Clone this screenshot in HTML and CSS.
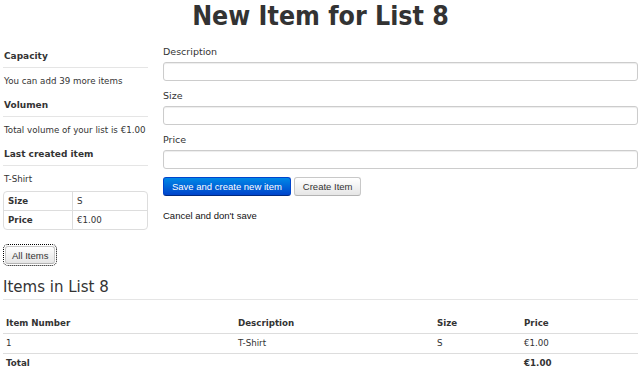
FILE: index.html
```html
<!DOCTYPE html>
<html lang="en">
<head>
    <meta charset="UTF-8">
    <title>New Item for List 8</title>
    <link rel="stylesheet" href="styles.css">
</head>
<body>
    <h1 class="title">New Item for List 8</h1>
    <div class="row">
        <div class="sidebar">
            <h5>Capacity</h5>
            <p>You can add 39 more items</p>
            <h5>Volumen</h5>
            <p>Total volume of your list is &euro;1.00</p>
            <h5>Last created item</h5>
            <p>T-Shirt</p>
            <table class="info-table">
                <tr><th>Size</th><td>S</td></tr>
                <tr><th>Price</th><td>&euro;1.00</td></tr>
            </table>
            <button type="button" class="btn btn-small btn-focus">All Items</button>
        </div>
        <form class="main">
            <label for="description">Description</label>
            <input type="text" id="description">
            <label for="size">Size</label>
            <input type="text" id="size">
            <label for="price">Price</label>
            <input type="text" id="price">
            <div class="actions">
                <button type="button" class="btn btn-primary">Save and create new item</button>
                <button type="button" class="btn">Create Item</button>
            </div>
            <a class="cancel" href="#">Cancel and don't save</a>
        </form>
    </div>

    <h3 class="list-title">Items in List 8</h3>
    <table class="items">
        <thead>
            <tr><th class="c-num">Item Number</th><th class="c-desc">Description</th><th class="c-size">Size</th><th>Price</th></tr>
        </thead>
        <tbody>
            <tr><td>1</td><td>T-Shirt</td><td>S</td><td>&euro;1.00</td></tr>
            <tr class="total"><th>Total</th><td></td><td></td><th>&euro;1.00</th></tr>
        </tbody>
    </table>
</body>
</html>
```

FILE: styles.css
```css
body {
    font-family: "DejaVu Sans", Verdana, sans-serif;
    font-size: 8.7px;
    color: #333;
    margin: 0;
    padding: 0 4px 0 3px;
}
.title {
    font-family: "DejaVu Sans Condensed", "DejaVu Sans", sans-serif;
    font-size: 26.5px;
    font-weight: bold;
    text-align: center;
    margin: 0;
    line-height: 31px;
}
.row {
    display: flex;
    gap: 15px;
    margin-top: 14px;
}
.sidebar {
    width: 145px;
    flex: none;
}
.sidebar h5 {
    font-size: 9px;
    font-weight: bold;
    margin: 0;
    line-height: 14px;
    padding: 4px 0 4px 1px;
    border-bottom: 1px solid #e5e5e5;
}
.sidebar p {
    margin: 0;
    line-height: 14px;
    padding: 6px 0 6px 1px;
}
.info-table {
    width: 100%;
    border-collapse: separate;
    border-spacing: 0;
    border: 1px solid #ddd;
    border-radius: 4px;
    margin-top: -1px;
}
.info-table th, .info-table td {
    text-align: left;
    padding: 0 4px;
    height: 18px;
    line-height: 18px;
}
.info-table th {
    width: 60px;
    border-right: 1px solid #ddd;
}
.info-table tr + tr th, .info-table tr + tr td {
    border-top: 1px solid #ddd;
}
.btn {
    font-family: "Liberation Sans", Arial, sans-serif;
    font-size: 9.5px;
    color: #333;
    background: linear-gradient(#fff, #e6e6e6);
    border: 1px solid #c8c8c8;
    border-bottom-color: #b3b3b3;
    border-radius: 3px;
    padding: 0 8px;
    margin: 0;
    height: 19px;
    line-height: 17px;
}
.btn-small {
    padding: 0 6px;
    height: 18px;
}
.btn-focus {
    margin: 16px 0 0 2px;
    outline: 1px dotted #000;
    outline-offset: 1px;
}
.btn-primary {
    color: #fff;
    background: linear-gradient(#0088e6, #0044cc);
    border-color: #0044cc #0044cc #002a80;
}
.main {
    flex: 1;
    display: flex;
    flex-direction: column;
    align-items: flex-start;
}
.main label {
    font-size: 9.5px;
    line-height: 14px;
    margin: 0 0 3px;
}
.main input {
    width: 100%;
    box-sizing: border-box;
    height: 19px;
    border: 1px solid #ccc;
    border-radius: 3px;
    box-shadow: inset 0 1px 1px rgba(0, 0, 0, 0.075);
    margin: 0 0 8px;
}
.actions {
    display: flex;
    gap: 3px;
}
.cancel {
    font-family: "Liberation Sans", Arial, sans-serif;
    font-size: 9.5px;
    color: #111;
    text-decoration: none;
    margin-top: 13px;
    line-height: 14px;
}
.list-title {
    font-size: 15px;
    font-weight: normal;
    margin: 14px 0 0;
    line-height: 18px;
    padding-bottom: 3px;
    border-bottom: 1px solid #e5e5e5;
}
.items {
    width: 100%;
    border-collapse: collapse;
    margin-top: 14px;
}
.items th, .items td {
    text-align: left;
    padding: 0 3px;
    height: 19px;
    line-height: 19px;
}
.items tbody td, .items tbody th {
    border-top: 1px solid #ddd;
}
.items .c-num { width: 226px; }
.items .c-desc { width: 193px; }
.items .c-size { width: 81px; }
```
